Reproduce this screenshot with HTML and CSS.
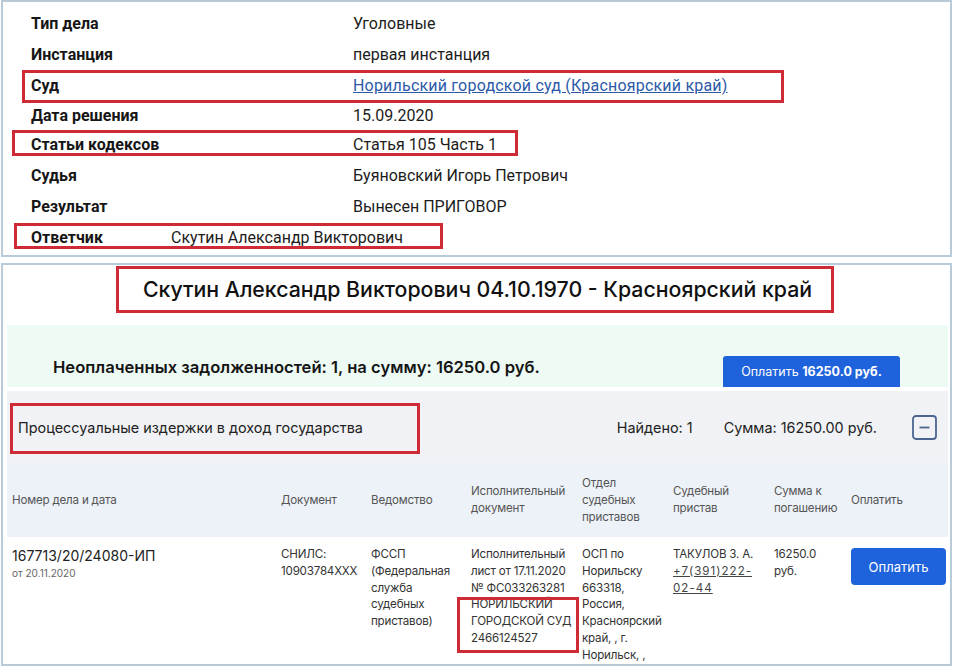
FILE: index.html
```html
<!DOCTYPE html>
<html lang="ru">
<head>
  <meta charset="UTF-8">
  <meta name="viewport" content="width=device-width, initial-scale=1.0">
  <title>Скутин Александр Викторович</title>
  <link rel="stylesheet" href="styles.css">
</head>
<body>
  <div class="panel case">
    <div class="row"><span class="label">Тип дела</span><span>Уголовные</span></div>
    <div class="row"><span class="label">Инстанция</span><span>первая инстанция</span></div>
    <div class="row"><span class="label">Суд</span><a class="court" href="#">Норильский городской суд (Красноярский край)</a></div>
    <div class="row row-tight"><span class="label">Дата решения</span><span>15.09.2020</span></div>
    <div class="row"><span class="label">Статьи кодексов</span><span>Статья 105 Часть 1</span></div>
    <div class="row"><span class="label">Судья</span><span>Буяновский Игорь Петрович</span></div>
    <div class="row"><span class="label">Результат</span><span>Вынесен ПРИГОВОР</span></div>
    <div class="row row-short"><span class="label">Ответчик</span><span>Скутин Александр Викторович</span></div>

    <span class="note note-court"></span>
    <span class="note note-articles"></span>
    <span class="note note-defendant"></span>
  </div>

  <div class="panel debts">
    <h1 class="title">Скутин Александр Викторович 04.10.1970 - Красноярский край</h1>

    <div class="summary">
      <p class="summary-text">Неоплаченных задолженностей: 1, на сумму: 16250.0 руб.</p>
      <button class="btn pay-all">Оплатить <b>16250.0 руб.</b></button>
    </div>

    <div class="group">
      <span class="group-name">Процессуальные издержки в доход государства</span>
      <span class="group-found">Найдено: 1</span>
      <span class="group-sum">Сумма: 16250.00 руб.</span>
      <svg class="collapse" width="25" height="25" viewBox="0 0 25 25">
        <rect x="1" y="1" width="23" height="23" rx="3" fill="none" stroke="#4c6590" stroke-width="1.8"/>
        <line x1="7.5" y1="12.5" x2="17.5" y2="12.5" stroke="#4c6590" stroke-width="1.8"/>
      </svg>
    </div>

    <div class="grid grid-head">
      <div>Номер дела и дата</div>
      <div>Документ</div>
      <div>Ведомство</div>
      <div>Исполнительный документ</div>
      <div>Отдел судебных приставов</div>
      <div>Судебный пристав</div>
      <div>Сумма к погашению</div>
      <div>Оплатить</div>
    </div>

    <div class="grid grid-row">
      <div>
        <div class="case-no">167713/20/24080-ИП</div>
        <div class="case-date">от 20.11.2020</div>
      </div>
      <div>СНИЛС: 10903784XXX</div>
      <div>ФССП (Федеральная служба судебных приставов)</div>
      <div>Исполнительный лист от 17.11.2020 № ФС033263281 НОРИЛЬСКИЙ ГОРОДСКОЙ СУД 2466124527</div>
      <div>ОСП по Норильску 663318, Россия, Красноярский край, , г. Норильск, ,</div>
      <div>ТАКУЛОВ З. А. <a class="phone" href="#">+7(391)222-02-44</a></div>
      <div>16250.0 руб.</div>
      <div><button class="btn pay">Оплатить</button></div>
    </div>

    <span class="note note-title"></span>
    <span class="note note-group"></span>
    <span class="note note-issuer"></span>
  </div>
</body>
</html>
```

FILE: styles.css
```css
body {
  margin: 0;
  background: #fff;
  color: #1c1c1c;
}

.panel {
  position: relative;
  box-sizing: border-box;
  width: 951px;
  margin-left: 1px;
  border: 2px solid #b9cbd9;
  background: #fff;
}

/* case card */
.case {
  height: 257px;
  padding: 6px 0 0 28px;
  font-family: Roboto, "Liberation Sans", sans-serif;
  font-size: 16px;
}
.row {
  display: grid;
  grid-template-columns: 322px 1fr;
  align-items: center;
  height: 31px;
}
.row-tight { height: 28px; }
.row-short { grid-template-columns: 140px 1fr; }
.label { font-weight: 700; color: #161616; }
.court { color: #2c5aa8; letter-spacing: 0.2px; }

/* red marks */
.note {
  position: absolute;
  box-sizing: border-box;
  border: 3px solid #cf2b37;
}
.note-court { left: 19px; top: 68px; width: 762px; height: 33px; }
.note-articles { left: 9px; top: 128px; width: 506px; height: 26px; }
.note-defendant { left: 11px; top: 221px; width: 429px; height: 26px; }
.note-title { left: 113px; top: 1px; width: 718px; height: 47px; }
.note-group { left: 7px; top: 138px; width: 410px; height: 51px; }
.note-issuer { left: 454px; top: 332px; width: 122px; height: 56px; }

/* debts card */
.debts {
  height: 403px;
  margin-top: 6px;
  padding: 0 2px 0 4px;
  overflow: hidden;
  font-family: Inter, "Noto Sans", sans-serif;
}
.title {
  margin: 0;
  height: 60px;
  padding-top: 9px;
  box-sizing: border-box;
  font-size: 21.3px;
  font-weight: 500;
  line-height: 30px;
  text-align: center;
  color: #111;
}

.summary {
  display: flex;
  justify-content: space-between;
  align-items: flex-start;
  height: 62px;
  padding: 31px 48px 0 46px;
  box-sizing: border-box;
  overflow: hidden;
  background: #eefaf4;
}
.summary-text {
  margin: 0;
  font-size: 16.6px;
  font-weight: 600;
  line-height: 22px;
  color: #151515;
}
.btn {
  border: 0;
  background: #1f63dc;
  color: #fff;
  font-family: inherit;
  cursor: pointer;
}
.pay-all {
  width: 177px;
  height: 34px;
  border-radius: 3px 3px 0 0;
  font-size: 12.5px;
  padding-bottom: 4px;
}
.pay-all b { font-weight: 700; }

.group {
  display: flex;
  align-items: center;
  height: 72px;
  margin-top: 4px;
  padding: 0 11px;
  background: #f1f2f5;
  font-size: 14.4px;
  color: #222;
}
.group-name { flex: 1; }
.group-found { margin-right: 31px; }
.group-sum { margin-right: 35px; }

.grid {
  display: grid;
  grid-template-columns: 269px 90px 100px 111px 91px 101px 77px 102px;
  font-size: 11.6px;
  letter-spacing: -0.2px;
  line-height: 16.8px;
}
.grid > div { padding: 0 5px; }
.grid-head {
  height: 74px;
  align-items: center;
  background: #edf2f9;
  color: #555;
  line-height: 17px;
}
.grid-row {
  padding-top: 9px;
  color: #333;
}
.case-no {
  font-size: 14px;
  letter-spacing: 0;
  line-height: 19px;
  color: #222;
}
.case-date {
  font-size: 10px;
  letter-spacing: 0;
  line-height: 16px;
  color: #666;
}
.phone {
  color: #444;
  letter-spacing: 1px;
}
.pay {
  width: 95px;
  height: 37px;
  margin-top: 2px;
  border-radius: 4px;
  font-size: 13px;
  letter-spacing: 0;
}
```
